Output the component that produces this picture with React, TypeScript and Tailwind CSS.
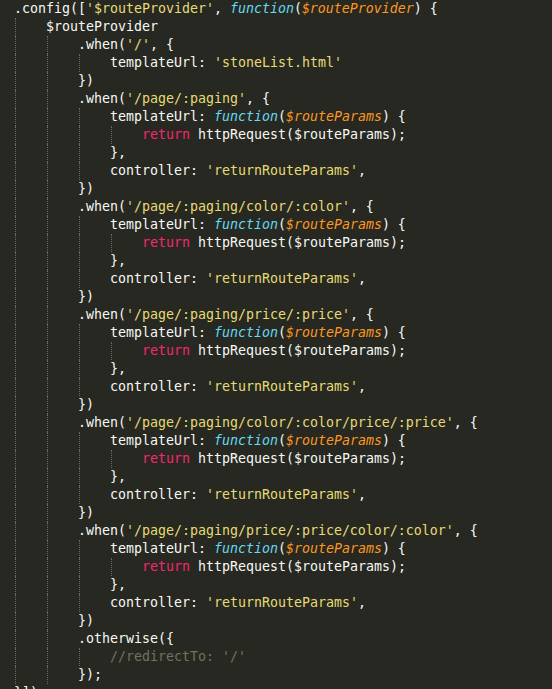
import React from "react";

type Tok = [string, string];

const W = "text-[#f8f8f2]";
const S = "text-[#e6db74]";
const K = "text-[#f92672]";
const F = "text-[#66d9ef] italic";
const P = "text-[#fd971f] italic";
const C = "text-[#75715e]";

type Line = { indent: number; toks: Tok[]; guides?: boolean };

const block = (path: string): Line[] => [
  { indent: 2, toks: [[".when(", W], [`'${path}'`, S], [", {", W]] },
  {
    indent: 3,
    toks: [
      ["templateUrl: ", W],
      ["function", F],
      ["(", W],
      ["$routeParams", P],
      [") {", W],
    ],
  },
  {
    indent: 4,
    toks: [
      ["return", K],
      [" httpRequest($routeParams);", W],
    ],
  },
  { indent: 3, toks: [["},", W]] },
  { indent: 3, toks: [["controller: ", W], ["'returnRouteParams'", S], [",", W]] },
  { indent: 2, toks: [["})", W]] },
];

const lines: Line[] = [
  {
    indent: 0,
    toks: [
      [".config([", W],
      ["'$routeProvider'", S],
      [", ", W],
      ["function", F],
      ["(", W],
      ["$routeProvider", P],
      [") {", W],
    ],
  },
  { indent: 1, toks: [["$routeProvider", W]] },
  { indent: 2, toks: [[".when(", W], ["'/'", S], [", {", W]] },
  { indent: 3, toks: [["templateUrl: ", W], ["'stoneList.html'", S]] },
  { indent: 2, toks: [["})", W]] },
  ...block("/page/:paging"),
  ...block("/page/:paging/color/:color"),
  ...block("/page/:paging/price/:price"),
  ...block("/page/:paging/color/:color/price/:price"),
  ...block("/page/:paging/price/:price/color/:color"),
  { indent: 2, toks: [[".otherwise({", W]] },
  { indent: 3, toks: [["//redirectTo: '/'", C]] },
  { indent: 2, toks: [["});", W]] },
  { indent: 0, toks: [["}])", W]] },
];

export default function App() {
  return (
    <div
      className="w-[552px] h-[689px] overflow-hidden bg-[#272822] pl-[14px]"
      style={{ fontFamily: '"DejaVu Sans Mono", "Liberation Mono", monospace' }}
    >
      {lines.map((ln, i) => (
        <div key={i} className="flex h-[18px] leading-[18px] text-[13.29px] whitespace-pre">
          {Array.from({ length: ln.indent }).map((_, g) => (
            <span key={g} className="w-[32px] h-[18px] shrink-0 pl-[1px]">
              <span className="block h-[18px] w-0 border-l border-dotted border-[#6a6a60]" />
            </span>
          ))}
          <span>
            {ln.toks.map((t, j) => (
              <span key={j} className={t[1]}>
                {t[0]}
              </span>
            ))}
          </span>
        </div>
      ))}
    </div>
  );
}
